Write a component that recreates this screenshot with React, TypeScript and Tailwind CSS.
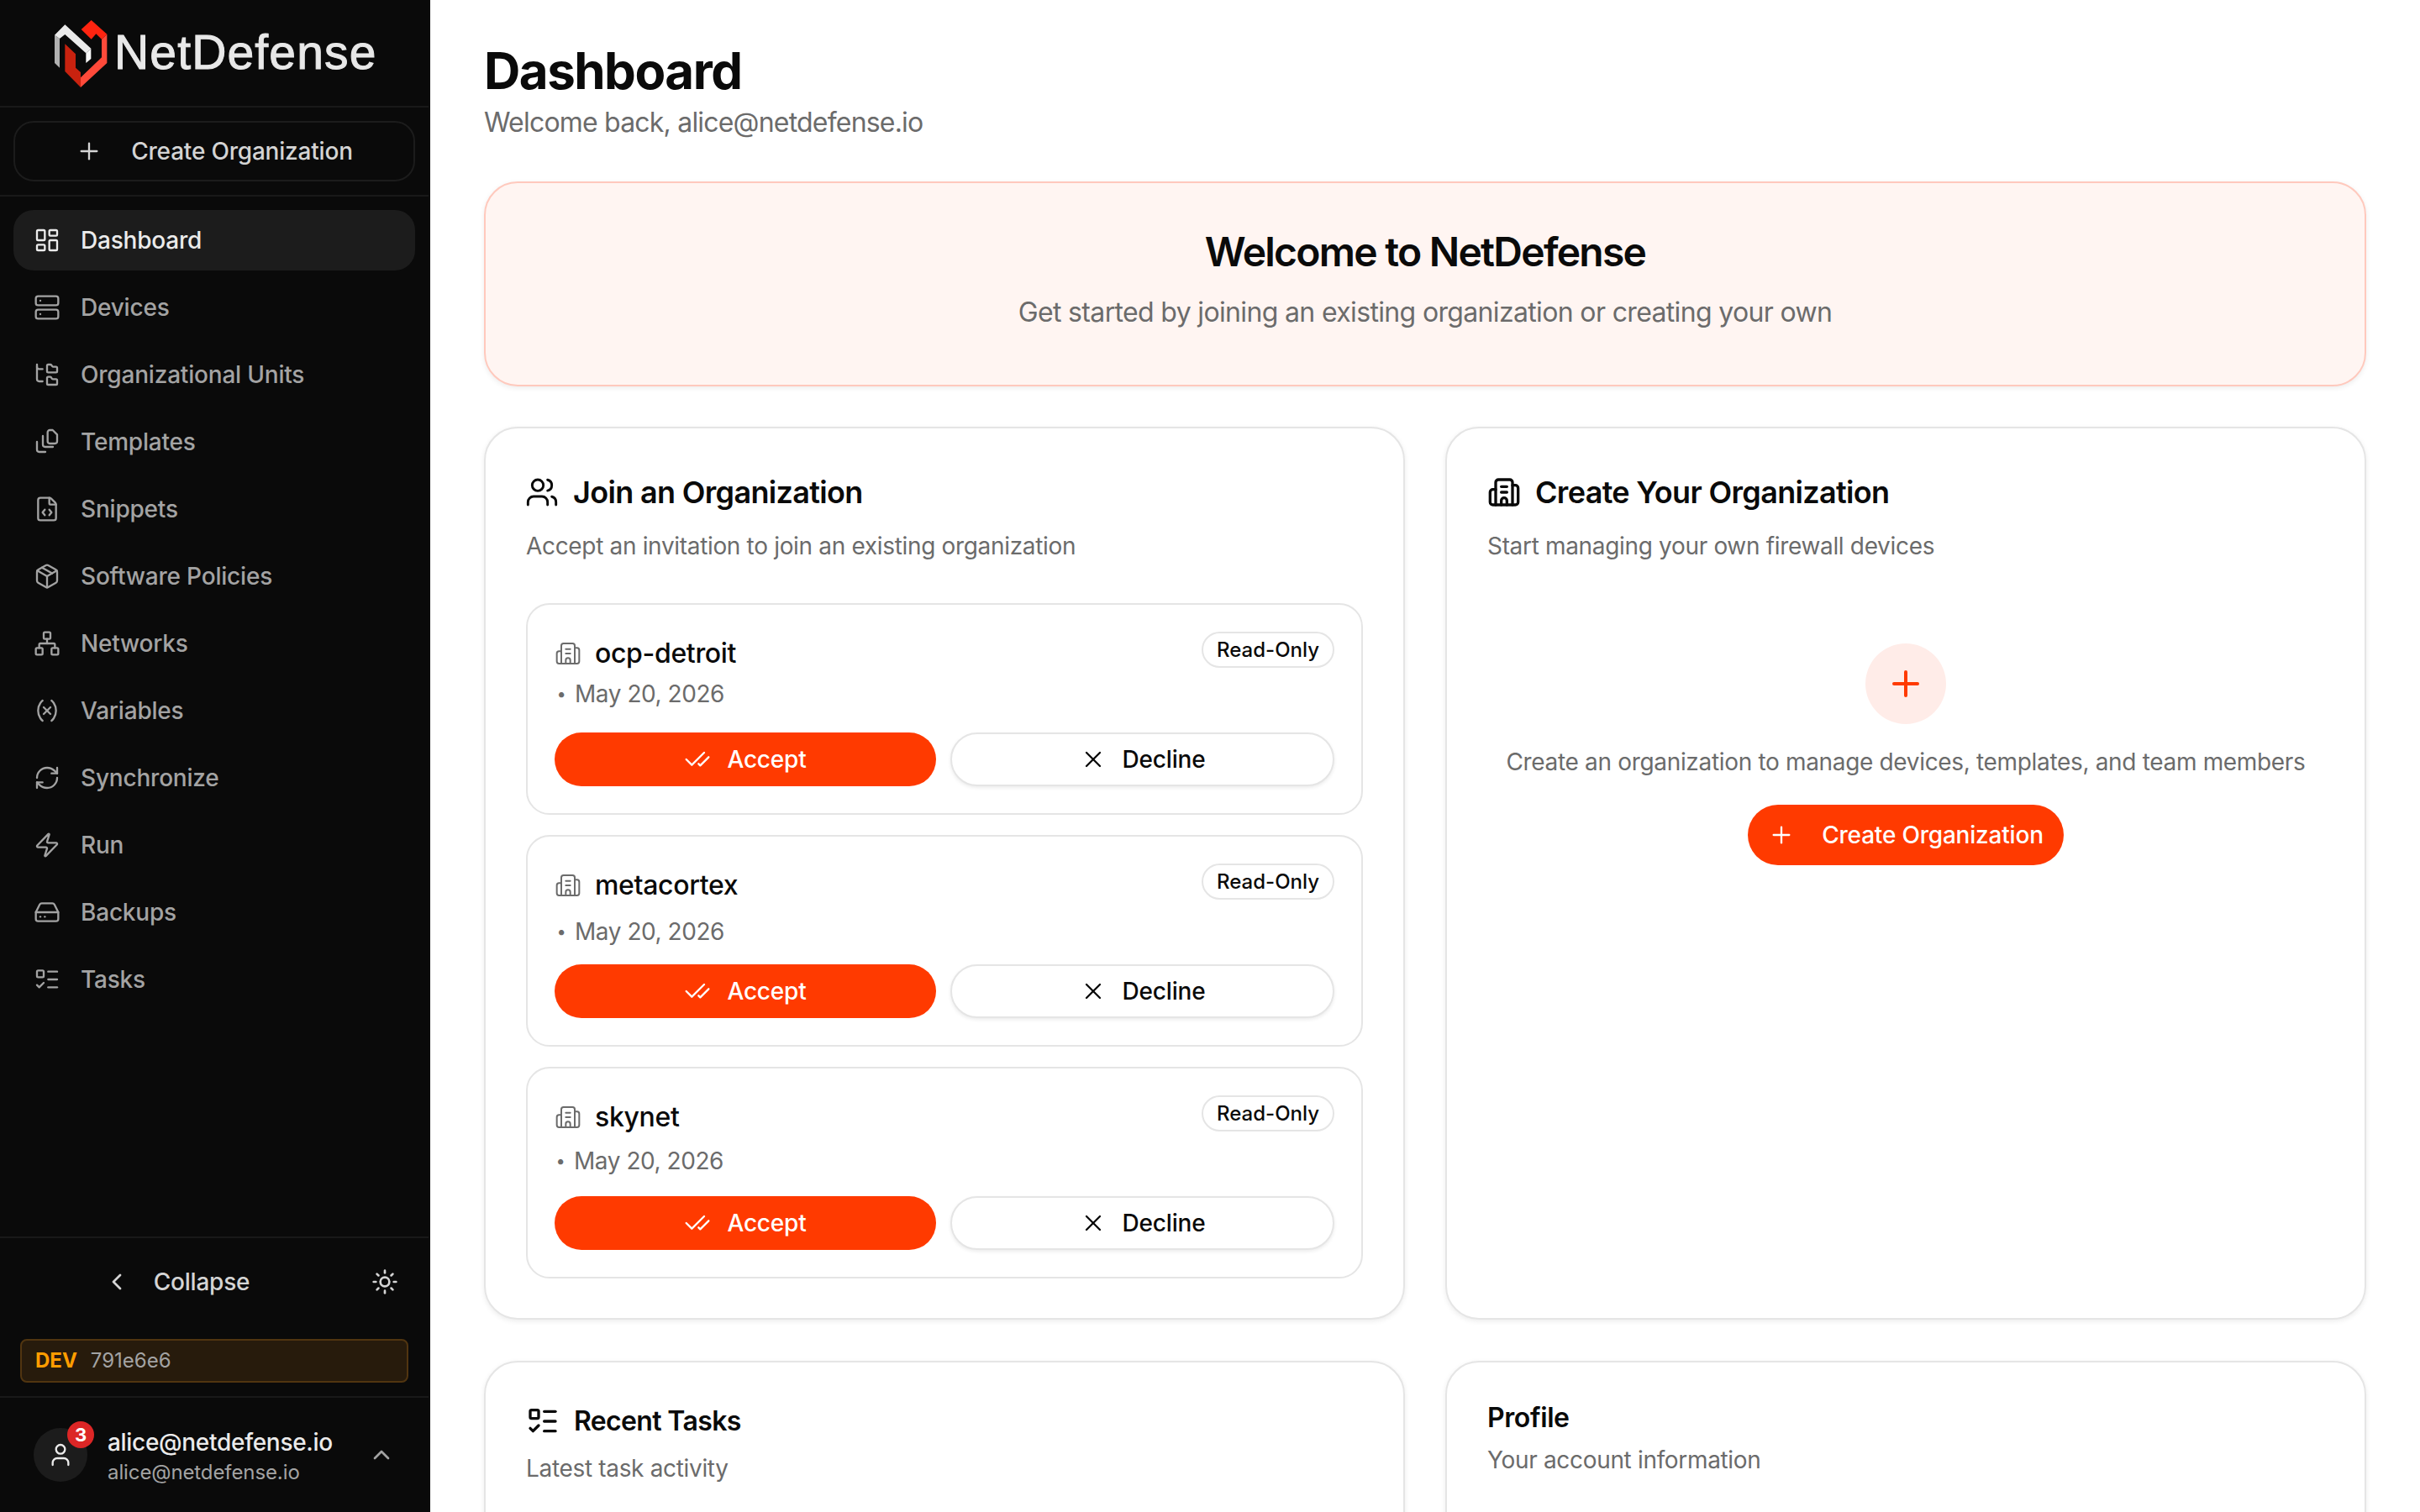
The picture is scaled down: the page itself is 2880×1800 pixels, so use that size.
import {
  Building2,
  CheckCheck,
  ChevronLeft,
  ChevronUp,
  FileCode,
  FolderTree,
  HardDrive,
  LayoutDashboard,
  ListTodo,
  Network,
  Package,
  Plus,
  RefreshCw,
  Server,
  Sun,
  User,
  Users,
  Variable,
  X,
  Zap,
} from "lucide-react";

function TemplatesIcon({ size, strokeWidth }: { size?: number; strokeWidth?: number }) {
  return (
    <svg
      width={size}
      height={size}
      viewBox="0 0 24 24"
      fill="none"
      stroke="currentColor"
      strokeWidth={strokeWidth}
      strokeLinecap="round"
      strokeLinejoin="round"
    >
      <path d="M17 1.5h-2.5a2 2 0 0 0-2 2v8a2 2 0 0 0 2 2h4.5a2 2 0 0 0 2-2V5.5z" />
      <path d="M8.25 6.75v7.75a2 2 0 0 0 2 2h7" />
      <path d="M3 12v7a2 2 0 0 0 2 2h5.5" />
    </svg>
  );
}

const navItems = [
  { label: "Dashboard", icon: LayoutDashboard, active: true },
  { label: "Devices", icon: Server },
  { label: "Organizational Units", icon: FolderTree },
  { label: "Templates", icon: TemplatesIcon },
  { label: "Snippets", icon: FileCode },
  { label: "Software Policies", icon: Package },
  { label: "Networks", icon: Network },
  { label: "Variables", icon: Variable },
  { label: "Synchronize", icon: RefreshCw },
  { label: "Run", icon: Zap },
  { label: "Backups", icon: HardDrive },
  { label: "Tasks", icon: ListTodo },
];

const invitations = [
  { name: "ocp-detroit", dateClass: "mt-[2px]" },
  { name: "metacortex", dateClass: "mt-[9px]" },
  { name: "skynet", dateClass: "mt-[6px] -ml-px" },
];

function Logo() {
  return (
    <svg viewBox="0 0 252 288" className="w-[84px] h-[96px] shrink-0">
      <polygon points="27,80 45,93 45,197 27,180" fill="#b0b0b0" />
      <polygon points="27,80 64,43 157,128 139,145 64,78 45,93" fill="#ebebeb" />
      <polygon points="139,145 157,128 157,165 139,180" fill="#f8f8f8" />
      <polygon points="64,112 102,148 102,197 120,213 120,267 64,210" fill="#c8220f" />
      <polygon points="195,95 214,77 214,180 120,267 120,232 195,160" fill="#ff4a3a" />
      <polygon points="122,60 158,27 214,77 195,95 175,76 158,95" fill="#ff2410" />
    </svg>
  );
}

function Sidebar() {
  return (
    <aside className="w-[512px] h-full shrink-0 flex flex-col bg-[#0a0a0a] border-r-2 border-r-[#0d0d0d]">
      <div className="h-[128px] shrink-0 flex items-center pl-[56px] border-b-2 border-[#191919]">
        <Logo />
        <span className="-ml-[4px] text-[57px] leading-none text-[#e8e8e8] tracking-[1.15px] [-webkit-text-stroke:1px_#e8e8e8] font-['Liberation_Sans',sans-serif] -translate-y-[1px]">
          NetDefense
        </span>
      </div>
      <div className="h-[106px] shrink-0 px-4 pt-4 border-b-2 border-[#191919]">
        <div className="h-[72px] flex items-center justify-center gap-[34px] rounded-[24px] border-2 border-[#1c1c1c] text-[#d4d4d4] text-[28px] font-medium tracking-[-0.2px]">
          <Plus size={32} strokeWidth={1.75} />
          <span>Create Organization</span>
        </div>
      </div>
      <nav className="flex flex-col gap-2 px-4 pt-4">
        {navItems.map((item) => (
          <div
            key={item.label}
            className={
              item.active
                ? "h-[72px] flex items-center gap-6 pl-6 rounded-[24px] bg-[#1c1c1c] text-[#ebebeb] text-[28px] font-medium tracking-[-0.2px]"
                : "h-[72px] flex items-center gap-6 pl-6 rounded-[24px] text-[#a3a3a3] text-[28px] font-medium tracking-[-0.2px]"
            }
          >
            <item.icon size={32} strokeWidth={1.75} />
            <span>{item.label}</span>
          </div>
        ))}
      </nav>
      <div className="mt-auto border-t-2 border-[#191919]">
        <div className="h-[72px] mt-4 flex items-center px-4 text-[#d4d4d4]">
          <div className="w-[388px] flex items-center justify-center gap-7 text-[28px] font-medium tracking-[-0.2px]">
            <ChevronLeft size={32} strokeWidth={2} />
            <span>Collapse</span>
          </div>
          <div className="ml-[22px] w-[64px] flex justify-center">
            <Sun size={32} strokeWidth={2} />
          </div>
        </div>
        <div className="mx-6 mt-8 mb-4 h-[52px] flex items-center gap-4 px-4 rounded-lg bg-[#271b0c] border-2 border-[#513510] text-[24px]">
          <span className="font-bold text-[#ff9d00]">DEV</span>
          <span className="text-[#a3a3a3]">791e6e6</span>
        </div>
      </div>
      <div className="h-[138px] shrink-0 flex items-center pl-10 border-t-2 border-[#191919]">
        <div className="relative w-16 h-16 rounded-full bg-[#1c1c1c] flex items-center justify-center text-[#ebebeb]">
          <User size={32} strokeWidth={1.75} />
          <span className="absolute -top-2 -right-2 w-8 h-8 rounded-full bg-[#dc2626] text-white text-[22px] font-bold flex items-center justify-center">
            3
          </span>
        </div>
        <div className="ml-6 mt-[3px] flex flex-col">
          <span className="text-[28px] leading-9 font-medium text-[#ebebeb] tracking-[-0.3px]">alice@netdefense.io</span>
          <span className="mt-[2px] text-[24px] leading-8 text-[#a3a3a3] tracking-[-0.1px]">alice@netdefense.io</span>
        </div>
        <ChevronUp size={32} strokeWidth={2} className="ml-auto mr-10 text-[#a3a3a3]" />
      </div>
    </aside>
  );
}

function Invitation({ name, dateClass }: { name: string; dateClass: string }) {
  return (
    <div className="h-[252px] flex flex-col rounded-[28px] border-2 border-[#e5e5e5] p-8 bg-white">
      <div className="flex items-start justify-between">
        <div className="h-[52px] flex items-center gap-4">
          <Building2 size={32} strokeWidth={1.5} className="text-[#6b6b6b]" />
          <span className="text-[32px] font-medium text-[#0a0a0a] tracking-[-0.35px]">{name}</span>
        </div>
        <span className="h-[43px] flex items-center px-4 rounded-full border-2 border-[#e5e5e5] text-[24px] font-medium text-[#0a0a0a]">
          Read-Only
        </span>
      </div>
      <div className={`${dateClass} h-10 flex items-center gap-2 text-[28px] text-[#6b6b6b] tracking-[-0.45px]`}>
        <span className="w-4 text-center text-[20px]">•</span>
        <span>May 20, 2026</span>
      </div>
      <div className="mt-auto grid grid-cols-[454px_1fr] gap-[17px]">
        <button className="h-16 flex items-center justify-center gap-[19px] rounded-full bg-[#ff3a00] text-white text-[28px] font-medium tracking-[-0.2px]">
          <CheckCheck size={32} strokeWidth={1.75} />
          Accept
        </button>
        <button className="h-16 flex items-center justify-center gap-[19px] rounded-full bg-white border-2 border-[#e5e5e5] shadow-[0_2px_4px_rgba(0,0,0,0.08)] text-[#0a0a0a] text-[28px] font-medium tracking-[-0.2px]">
          <X size={32} strokeWidth={1.75} />
          Decline
        </button>
      </div>
    </div>
  );
}

const cardClass = "rounded-[40px] border-2 border-[#e5e5e5] bg-white p-12 shadow-[0_2px_6px_rgba(0,0,0,0.08)]";

export default function App() {
  return (
    <div className="w-[2880px] h-[1800px] flex overflow-hidden bg-white font-['Inter',sans-serif]">
      <Sidebar />
      <main className="flex-1 min-w-0 h-full overflow-hidden px-16 pt-12 text-[#0a0a0a]">
        <h1 className="text-[60px] leading-[72px] font-bold tracking-tight">Dashboard</h1>
        <p className="mt-[6px] text-[32px] leading-10 text-[#6b6b6b] tracking-[-0.8px]">Welcome back, alice@netdefense.io</p>

        <section className="mt-[50px] h-[244px] pt-[50px] flex flex-col items-center rounded-[40px] border-2 border-[#ffc9bd] bg-[#fff5f2] shadow-[0_2px_6px_rgba(0,0,0,0.08)]">
          <h2 className="text-[48px] leading-[64px] font-semibold tracking-[-1.75px]">Welcome to NetDefense</h2>
          <p className="mt-4 text-[32px] leading-[48px] text-[#6b6b6b] tracking-[-0.65px]">
            Get started by joining an existing organization or creating your own
          </p>
        </section>

        <div className="mt-12 grid grid-cols-2 gap-12">
          <section className={`${cardClass} pb-[47px]`}>
            <div className="h-14 flex items-center gap-[17px]">
              <Users size={40} strokeWidth={1.75} className="-ml-[1px]" />
              <h3 className="text-[36px] font-semibold tracking-[-0.67px]">Join an Organization</h3>
            </div>
            <p className="mt-4 text-[28px] leading-10 text-[#6b6b6b] tracking-[-0.33px]">Accept an invitation to join an existing organization</p>
            <div className="mt-12 flex flex-col gap-6">
              {invitations.map((inv) => (
                <Invitation key={inv.name} name={inv.name} dateClass={inv.dateClass} />
              ))}
            </div>
          </section>

          <section className={cardClass}>
            <div className="h-14 flex items-center gap-[17px]">
              <Building2 size={40} strokeWidth={2} />
              <h3 className="text-[36px] font-semibold tracking-[-0.67px]">Create Your Organization</h3>
            </div>
            <p className="mt-4 text-[28px] leading-10 text-[#6b6b6b] tracking-[-0.33px]">Start managing your own firewall devices</p>
            <div className="mt-24 flex flex-col items-center">
              <div className="w-24 h-24 rounded-full bg-[#ffece8] flex items-center justify-center text-[#ff3a00]">
                <Plus size={48} strokeWidth={2} />
              </div>
              <p className="mt-[25px] text-[28px] leading-10 text-[#6b6b6b] tracking-[-0.33px]">
                Create an organization to manage devices, templates, and team members
              </p>
              <button className="mt-[31px] h-[72px] px-6 flex items-center gap-8 rounded-full bg-[#ff3a00] text-white text-[28px] font-medium tracking-[-0.2px]">
                <Plus size={32} strokeWidth={1.75} />
                Create Organization
              </button>
            </div>
          </section>
        </div>

        <div className="mt-[49px] grid grid-cols-2 gap-12">
          <section className={`${cardClass} h-[400px]`}>
            <div className="h-11 flex items-center gap-[17px]">
              <ListTodo size={40} strokeWidth={2} />
              <h3 className="text-[32px] font-semibold tracking-[-0.65px]">Recent Tasks</h3>
            </div>
            <p className="mt-[14px] text-[28px] leading-10 text-[#6b6b6b] tracking-[-0.33px]">Latest task activity</p>
          </section>
          <section className={`${cardClass} h-[400px]`}>
            <h3 className="text-[32px] leading-9 font-semibold tracking-[-0.4px]">Profile</h3>
            <p className="mt-3 text-[28px] leading-10 text-[#6b6b6b] tracking-[-0.33px]">Your account information</p>
          </section>
        </div>
      </main>
    </div>
  );
}
